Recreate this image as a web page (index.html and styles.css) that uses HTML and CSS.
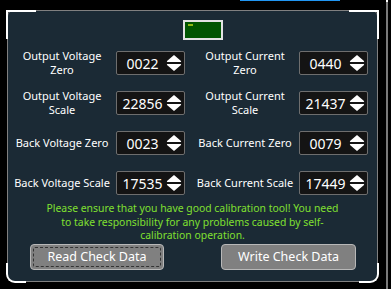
FILE: index.html
```html
<!DOCTYPE html>
<html lang="en">
<head>
    <meta charset="UTF-8">
    <title>Calibration</title>
    <link rel="stylesheet" href="styles.css">
</head>
<body>

    <div class="tab-line"></div>
    <div class="edge"></div>

    <div class="panel">
        <span class="corner tl"></span>
        <span class="corner tr"></span>
        <span class="corner bl"></span>
        <span class="corner br"></span>

        <div class="status"><span class="led"></span></div>

        <div class="fields">
            <div class="field">
                <label>Output Voltage<br>Zero</label>
                <div class="spin"><span class="value">0022</span><svg class="arrows" width="16" height="18" viewBox="0 0 16 18"><path d="M8 1 L15 7 Q15.5 8 14.5 8 L1.5 8 Q0.5 8 1 7 Z M8 17 L15 11 Q15.5 10 14.5 10 L1.5 10 Q0.5 10 1 11 Z" fill="#fff"/></svg></div>
            </div>
            <div class="field">
                <label>Output Current<br>Zero</label>
                <div class="spin"><span class="value">0440</span><svg class="arrows" width="16" height="18" viewBox="0 0 16 18"><path d="M8 1 L15 7 Q15.5 8 14.5 8 L1.5 8 Q0.5 8 1 7 Z M8 17 L15 11 Q15.5 10 14.5 10 L1.5 10 Q0.5 10 1 11 Z" fill="#fff"/></svg></div>
            </div>
            <div class="field">
                <label>Output Voltage<br>Scale</label>
                <div class="spin"><span class="value">22856</span><svg class="arrows" width="16" height="18" viewBox="0 0 16 18"><path d="M8 1 L15 7 Q15.5 8 14.5 8 L1.5 8 Q0.5 8 1 7 Z M8 17 L15 11 Q15.5 10 14.5 10 L1.5 10 Q0.5 10 1 11 Z" fill="#fff"/></svg></div>
            </div>
            <div class="field">
                <label>Output Current<br>Scale</label>
                <div class="spin"><span class="value">21437</span><svg class="arrows" width="16" height="18" viewBox="0 0 16 18"><path d="M8 1 L15 7 Q15.5 8 14.5 8 L1.5 8 Q0.5 8 1 7 Z M8 17 L15 11 Q15.5 10 14.5 10 L1.5 10 Q0.5 10 1 11 Z" fill="#fff"/></svg></div>
            </div>
            <div class="field">
                <label>Back Voltage Zero</label>
                <div class="spin"><span class="value">0023</span><svg class="arrows" width="16" height="18" viewBox="0 0 16 18"><path d="M8 1 L15 7 Q15.5 8 14.5 8 L1.5 8 Q0.5 8 1 7 Z M8 17 L15 11 Q15.5 10 14.5 10 L1.5 10 Q0.5 10 1 11 Z" fill="#fff"/></svg></div>
            </div>
            <div class="field">
                <label>Back Current Zero</label>
                <div class="spin"><span class="value">0079</span><svg class="arrows" width="16" height="18" viewBox="0 0 16 18"><path d="M8 1 L15 7 Q15.5 8 14.5 8 L1.5 8 Q0.5 8 1 7 Z M8 17 L15 11 Q15.5 10 14.5 10 L1.5 10 Q0.5 10 1 11 Z" fill="#fff"/></svg></div>
            </div>
            <div class="field">
                <label>Back Voltage Scale</label>
                <div class="spin"><span class="value">17535</span><svg class="arrows" width="16" height="18" viewBox="0 0 16 18"><path d="M8 1 L15 7 Q15.5 8 14.5 8 L1.5 8 Q0.5 8 1 7 Z M8 17 L15 11 Q15.5 10 14.5 10 L1.5 10 Q0.5 10 1 11 Z" fill="#fff"/></svg></div>
            </div>
            <div class="field">
                <label>Back Current Scale</label>
                <div class="spin"><span class="value">17449</span><svg class="arrows" width="16" height="18" viewBox="0 0 16 18"><path d="M8 1 L15 7 Q15.5 8 14.5 8 L1.5 8 Q0.5 8 1 7 Z M8 17 L15 11 Q15.5 10 14.5 10 L1.5 10 Q0.5 10 1 11 Z" fill="#fff"/></svg></div>
            </div>
        </div>

        <p class="warning">Please ensure that you have good calibration tool! You need<br>to take responsibility for any problems caused by self-<br>calibration operation.</p>

        <div class="actions">
            <button class="btn focused"><span>Read Check Data</span></button>
            <button class="btn">Write Check Data</button>
        </div>
    </div>

</body>
</html>
```

FILE: styles.css
```css
body {
    margin: 0;
    width: 391px;
    height: 289px;
    overflow: hidden;
    background-color: #000;
    font-family: "Noto Sans", "Open Sans", sans-serif;
    color: #fff;
    position: relative;
}

/* bits of the window behind the panel */
.tab-line {
    position: absolute;
    left: 240px;
    top: 0;
    width: 100px;
    height: 1px;
    background-color: #2196f3;
}

.edge {
    position: absolute;
    left: 386px;
    top: 0;
    width: 2px;
    height: 289px;
    background-color: #7a7a7a;
    border-top: 2px solid #fff;
}

.panel {
    position: relative;
    box-sizing: border-box;
    margin: 10px 0 0 7px;
    width: 371px;
    height: 272px;
    padding: 9px 4px 0 4px;
    background-color: #1b2a35;
    border: 1px solid #808080;
    border-radius: 6px;
}

.corner {
    position: absolute;
    width: 28px;
    height: 27px;
    border: 0 solid #fff;
}

.corner.tl {
    left: -2px;
    top: -1px;
    border-width: 2px 0 0 2px;
}

.corner.tr {
    right: -2px;
    top: -1px;
    border-width: 2px 2px 0 0;
}

.corner.bl {
    left: -2px;
    bottom: -2px;
    width: 18px;
    height: 18px;
    border-width: 0 0 2px 2px;
    border-bottom-left-radius: 9px;
}

.corner.br {
    right: -2px;
    bottom: -2px;
    width: 18px;
    height: 18px;
    border-width: 0 2px 2px 0;
    border-bottom-right-radius: 9px;
}

.status {
    display: flex;
    justify-content: center;
    padding-left: 21px;
}

.led {
    display: block;
    box-sizing: border-box;
    width: 40px;
    height: 20px;
    background-color: #005500;
    border: 2px solid #e2e2e2;
    position: relative;
}

.led::before {
    content: "";
    position: absolute;
    left: 3px;
    top: 2px;
    width: 5px;
    height: 2px;
    background-color: #8cb814;
}

.fields {
    display: grid;
    grid-template-columns: 173px 173px;
    grid-auto-rows: 40px;
    column-gap: 10px;
    margin-top: 3px;
}

.field {
    display: grid;
    grid-template-columns: 100px 69px;
    column-gap: 4px;
    align-items: center;
}

.field label {
    font-size: 11px;
    line-height: 14px;
    text-align: center;
    white-space: nowrap;
}

.spin {
    box-sizing: border-box;
    height: 24px;
    display: flex;
    align-items: center;
    background-color: #141414;
    border: 1px solid #6e6e6e;
    border-radius: 2px;
}

.value {
    flex: 1;
    text-align: center;
    font-size: 14px;
    padding-left: 2px;
}

.arrows {
    margin-right: 2px;
}

.warning {
    margin: -1px 0 0 0;
    font-size: 10.4px;
    line-height: 13.5px;
    text-align: center;
    color: #80e030;
}

.actions {
    display: flex;
    justify-content: space-between;
    padding: 0 17px 0 18px;
    margin-top: 1px;
}

.btn {
    box-sizing: border-box;
    width: 135px;
    height: 26px;
    padding: 0;
    background-color: #808080;
    color: #fff;
    border: 1px solid #b8b8b8;
    border-radius: 4px;
    font-family: "Noto Sans", "Open Sans", sans-serif;
    font-size: 12.5px;
}

.btn.focused {
    width: 134px;
    padding: 2px;
}

.btn.focused span {
    display: flex;
    align-items: center;
    justify-content: center;
    height: 100%;
    border: 1px dashed #333;
    border-radius: 2px;
    box-sizing: border-box;
}
```
